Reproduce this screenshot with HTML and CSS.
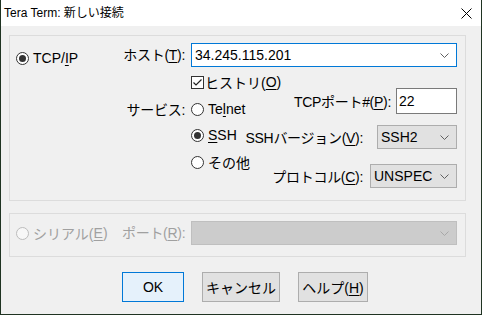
FILE: index.html
```html
<!DOCTYPE html>
<html lang="ja">
<head>
    <meta charset="UTF-8">
    <title>Tera Term: 新しい接続</title>
    <link rel="stylesheet" href="styles.css">
</head>
<body>
<div class="window">
    <div class="titlebar">
        <span class="title">Tera Term: 新しい接続</span>
        <svg class="close" width="11" height="11" viewBox="0 0 11 11">
            <path d="M0.5 0.5L10.5 10.5M10.5 0.5L0.5 10.5" stroke="#000" stroke-width="1" fill="none"/>
        </svg>
    </div>

    <div class="client">
        <!-- TCP/IP group -->
        <div class="group group-tcp">
            <div class="col-a">
                <div class="opt opt-tcp"><span class="radio checked"></span>TCP/<u>I</u>P</div>
            </div>
            <div class="col-b">
                <div class="lbl lbl-host">ホスト(<u>T</u>):</div>
                <div class="lbl lbl-service">サービス:</div>
            </div>
            <div class="col-c">
                <div class="combo combo-host">
                    <span class="combo-text">34.245.115.201</span>
                    <svg class="chev" width="9" height="5" viewBox="0 0 9 5"><path d="M0.5 0.5L4.5 4.5L8.5 0.5" stroke="#606060" fill="none"/></svg>
                </div>
                <div class="split">
                    <div class="choices">
                        <div class="opt opt-history">
                            <span class="checkbox">
                                <svg width="11" height="11" viewBox="0 0 11 11"><path d="M1.5 5.5L4 8L9.5 2.5" stroke="#222" stroke-width="1.2" fill="none"/></svg>
                            </span>ヒストリ(<u>O</u>)
                        </div>
                        <div class="opt opt-telnet"><span class="radio"></span>Te<u>l</u>net</div>
                        <div class="opt opt-ssh"><span class="radio checked"></span><u>S</u>SH</div>
                        <div class="opt opt-other"><span class="radio"></span>その他</div>
                    </div>
                    <div class="params">
                        <div class="param param-port">
                            <span class="param-label">TCPポート#(<u>P</u>):</span>
                            <div class="edit">22</div>
                        </div>
                        <div class="param param-version">
                            <span class="param-label">SSHバージョン(<u>V</u>):</span>
                            <div class="combo combo-gray combo-version">
                                <span class="combo-text">SSH2</span>
                                <svg class="chev" width="9" height="5" viewBox="0 0 9 5"><path d="M0.5 0.5L4.5 4.5L8.5 0.5" stroke="#606060" fill="none"/></svg>
                            </div>
                        </div>
                        <div class="param param-proto">
                            <span class="param-label">プロトコル(<u>C</u>):</span>
                            <div class="combo combo-gray combo-proto">
                                <span class="combo-text">UNSPEC</span>
                                <svg class="chev" width="9" height="5" viewBox="0 0 9 5"><path d="M0.5 0.5L4.5 4.5L8.5 0.5" stroke="#606060" fill="none"/></svg>
                            </div>
                        </div>
                    </div>
                </div>
            </div>
        </div>

        <!-- Serial group (disabled) -->
        <div class="group group-serial">
            <div class="col-a">
                <div class="opt opt-serial disabled"><span class="radio"></span>シリアル(<u>E</u>)</div>
            </div>
            <div class="col-b">
                <div class="lbl lbl-port disabled">ポート(<u>R</u>):</div>
            </div>
            <div class="col-c">
                <div class="combo combo-disabled">
                    <span class="combo-text"></span>
                    <svg class="chev" width="9" height="5" viewBox="0 0 9 5"><path d="M0.5 0.5L4.5 4.5L8.5 0.5" stroke="#a8a8a8" fill="none"/></svg>
                </div>
            </div>
        </div>

        <div class="buttons">
            <button class="btn btn-default btn-ok">OK</button>
            <button class="btn btn-cancel">キャンセル</button>
            <button class="btn btn-help">ヘルプ(<u>H</u>)</button>
        </div>
    </div>
</div>
</body>
</html>
```

FILE: styles.css
```css
*, *::before, *::after {
    box-sizing: border-box;
}

html, body {
    margin: 0;
    padding: 0;
    background: #f0f0f0;
}
body {
    font-family: "Liberation Sans", "Noto Sans CJK JP", sans-serif;
    font-size: 14px;
    color: #000;
}
u {
    text-decoration: underline;
    text-underline-offset: 2px;
}

.window {
    width: 482px;
    height: 315px;
    display: flex;
    flex-direction: column;
    border: 1px solid #1f3322;
    border-top: none;
    background: #f0f0f0;
}

/* title bar */
.titlebar {
    flex: 0 0 26px;
    display: flex;
    align-items: center;
    justify-content: space-between;
    background: #fff;
    padding-left: 3px;
    padding-right: 9px;
}
.title {
    font-size: 12px;
    line-height: 16px;
}
.close {
    display: block;
    margin-top: 1px;
}

/* client area */
.client {
    flex: 1;
    padding: 9px 15px 0 8px;
}
.group {
    display: flex;
    width: 457px;
    border: 1px solid #dcdcdc;
}
.group-tcp {
    height: 166px;
}
.group-serial {
    height: 44px;
    margin-top: 12px;
}

.col-a {
    flex: 0 0 112px;
    min-width: 0;
    padding-left: 6px;
}
.col-b {
    flex: 0 0 63px;
    min-width: 0;
    text-align: right;
}
.col-c {
    flex: 0 0 266px;
    min-width: 0;
    margin-left: 6px;
}

.group-tcp .col-a {
    padding-top: 10px;
}
.group-tcp .col-b,
.group-tcp .col-c {
    padding-top: 7px;
}
.group-serial .col-a,
.group-serial .col-b,
.group-serial .col-c {
    padding-top: 7px;
}

.lbl {
    height: 24px;
    line-height: 24px;
    white-space: nowrap;
    letter-spacing: -0.3px;
}
.lbl-service {
    margin-top: 33px;
    height: 20px;
    line-height: 20px;
}

/* radio / checkbox options */
.opt {
    display: flex;
    align-items: center;
    height: 24px;
    white-space: nowrap;
}
.radio {
    position: relative;
    flex: 0 0 13px;
    width: 13px;
    height: 13px;
    border: 1px solid #333;
    border-radius: 50%;
    background: #fff;
    margin-right: 4px;
}
.radio.checked::after {
    content: "";
    position: absolute;
    left: 2px;
    top: 2px;
    width: 7px;
    height: 7px;
    border-radius: 50%;
    background: #333;
}
.checkbox {
    flex: 0 0 13px;
    width: 13px;
    height: 13px;
    border: 1px solid #333;
    background: #fff;
    margin-right: 1px;
}
.checkbox svg {
    display: block;
}
.disabled {
    color: #a0a0a0;
}
.disabled .radio {
    border-color: #bcbcbc;
    background: #f7f7f7;
}

/* combos and edits */
.combo {
    display: flex;
    align-items: center;
    justify-content: space-between;
    height: 24px;
    border: 1px solid #7a7a7a;
    background: #fff;
    padding: 0 7px 0 3px;
}
.combo-host {
    border-color: #0078d7;
}
.combo-gray {
    background: #e1e1e1;
    border-color: #adadad;
}
.combo-disabled {
    background: #cccccc;
    border-color: #bfbfbf;
    width: 266px;
}
.combo-text {
    line-height: 20px;
}
.chev {
    display: block;
}

.split {
    display: flex;
    min-width: 0;
}
.choices {
    flex: 0 0 59px;
    min-width: 0;
}
.opt-history {
    margin-top: 5px;
    height: 20px;
}
.opt-telnet {
    margin-top: 7px;
    height: 20px;
}
.opt-ssh {
    margin-top: 6px;
    height: 20px;
}
.opt-other {
    margin-top: 7px;
    height: 20px;
}

.params {
    flex: 1 1 0;
    min-width: 0;
    display: flex;
    flex-direction: column;
    align-items: flex-end;
}
.param {
    display: flex;
    align-items: center;
    white-space: nowrap;
    flex-shrink: 0;
}
.param-label {
    letter-spacing: -0.3px;
}
.param-port {
    margin-top: 21px;
}
.param-version {
    margin-top: 11px;
}
.param-proto {
    margin-top: 15px;
}
.param-port .param-label {
    margin-right: 5px;
}
.param-version .param-label {
    margin-right: 14px;
}
.param-proto .param-label {
    margin-right: 7px;
}
.edit {
    width: 61px;
    height: 26px;
    line-height: 24px;
    border: 1px solid #7a7a7a;
    background: #fff;
    padding-left: 2px;
}
.combo-version {
    width: 80px;
}
.combo-proto {
    width: 87px;
}

/* buttons */
.buttons {
    display: flex;
    gap: 18px;
    margin-top: 15px;
    padding-left: 113px;
}
.btn {
    height: 30px;
    font-family: "Liberation Sans", "Noto Sans CJK JP", sans-serif;
    font-size: 14px;
    color: #000;
    background: #e1e1e1;
    border: 1px solid #adadad;
    padding: 0;
}
.btn-default {
    background: #e5f1fb;
    border-color: #0078d7;
}
.btn-ok {
    width: 62px;
}
.btn-cancel {
    width: 78px;
}
.btn-help {
    width: 70px;
}
```
